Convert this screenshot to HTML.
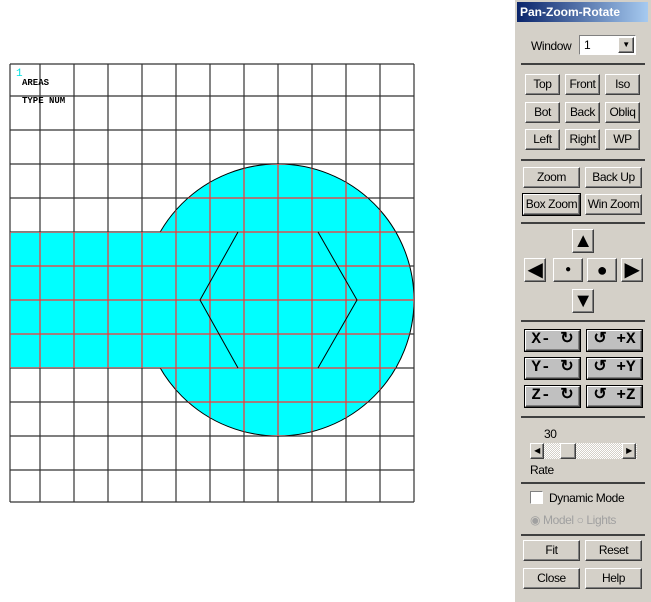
<!DOCTYPE html>
<html><head><style>
body{margin:0;width:651px;height:602px;background:#fff;position:relative;overflow:hidden;font-family:"Liberation Sans",sans-serif;font-size:12px}
#panel{position:absolute;left:514px;top:0;width:137px;height:602px;background:#d4d0c8;border-left:1px solid #fff;box-shadow:inset -1px 0 #808080;letter-spacing:-0.4px}
.title{position:absolute;left:2px;top:2px;width:131px;height:20px;background:linear-gradient(90deg,#0a246a,#a6caf0);color:#fff;font-weight:bold;font-size:12px;line-height:20px;padding-left:3px;box-sizing:border-box;letter-spacing:0}
.b{position:absolute;height:21px;background:#d4d0c8;border:1px solid;border-color:#fff #404040 #404040 #fff;box-shadow:inset -1px -1px #808080;box-sizing:border-box;text-align:center;line-height:19px;font-size:12px;color:#000}
.sep{position:absolute;left:6px;width:124px;height:0;border-top:2px solid #404040}
.rot{font-family:"Liberation Mono",monospace;font-weight:bold;font-size:16px;line-height:17px;background:#c0c0c0;outline:1px solid #000;letter-spacing:0}
</style></head><body>
<svg width="514" height="602" style="position:absolute;left:0;top:0">
<defs><clipPath id="c"><circle cx="278" cy="300" r="136"/><rect x="10" y="232" width="200" height="136"/></clipPath></defs>
<g stroke="#333" stroke-width="1.2">
<path d="M10 64V502M40 64V502M74 64V502M108 64V502M142 64V502M176 64V502M210 64V502M244 64V502M278 64V502M312 64V502M346 64V502M380 64V502M414 64V502M10 64H414M10 96H414M10 130H414M10 164H414M10 198H414M10 232H414M10 266H414M10 300H414M10 334H414M10 368H414M10 402H414M10 436H414M10 470H414M10 502H414"/>
</g>
<circle cx="278" cy="300" r="136" fill="#00ffff" stroke="#000" stroke-width="1"/>
<rect x="10" y="232" width="200" height="136" fill="#00ffff"/>
<g clip-path="url(#c)" stroke="#ff3030" stroke-width="1.2">
<path d="M10 64V502M40 64V502M74 64V502M108 64V502M142 64V502M176 64V502M210 64V502M244 64V502M278 64V502M312 64V502M346 64V502M380 64V502M414 64V502M10 164H414M10 198H414M10 232H414M10 266H414M10 300H414M10 334H414M10 368H414M10 402H414M10 436H414"/>
</g>
<path d="M238 232L200 300L238 368M318 232L357 300L318 368" fill="none" stroke="#000" stroke-width="1"/>
<text x="16" y="76" fill="#00e0e0" font-family="Liberation Mono" font-size="11">1</text>
<text x="22" y="85" font-family="Liberation Mono" font-size="9" font-weight="bold" fill="#000">AREAS</text>
<text x="22" y="103" font-family="Liberation Mono" font-size="9" font-weight="bold" fill="#000">TYPE NUM</text>
</svg>
<div id="panel">
<div class="title">Pan-Zoom-Rotate</div>
<div style="position:absolute;left:16px;top:39px">Window</div>
<div style="position:absolute;left:64px;top:35px;width:57px;height:20px;background:#fff;border:1px solid;border-color:#808080 #fff #fff #808080;box-sizing:border-box;padding-left:4px;line-height:18px">1<div class="b" style="left:38px;top:1px;width:16px;height:16px;line-height:14px;font-size:8px">▼</div></div>
<div class="sep" style="top:63px"></div>
<div class="b" style="left:10px;top:74px;width:35px">Top</div><div class="b" style="left:50px;top:74px;width:35px">Front</div><div class="b" style="left:90px;top:74px;width:35px">Iso</div>
<div class="b" style="left:10px;top:102px;width:35px">Bot</div><div class="b" style="left:50px;top:102px;width:35px">Back</div><div class="b" style="left:90px;top:102px;width:35px">Obliq</div>
<div class="b" style="left:10px;top:129px;width:35px">Left</div><div class="b" style="left:50px;top:129px;width:35px">Right</div><div class="b" style="left:90px;top:129px;width:35px">WP</div>
<div class="sep" style="top:159px"></div>
<div class="b" style="left:8px;top:167px;width:57px">Zoom</div><div class="b" style="left:70px;top:167px;width:57px">Back Up</div>
<div class="b" style="left:8px;top:194px;width:57px;outline:1px solid #000">Box Zoom</div><div class="b" style="left:70px;top:194px;width:57px">Win Zoom</div>
<div class="sep" style="top:222px"></div>
<div class="b" style="left:57px;top:229px;width:22px;height:24px;font-size:20px;line-height:22px">▲</div>
<div class="b" style="left:9px;top:258px;width:22px;height:24px;font-size:20px;line-height:22px">◀</div>
<div class="b" style="left:38px;top:258px;width:30px;height:24px;font-size:10px;line-height:22px">●</div>
<div class="b" style="left:72px;top:258px;width:30px;height:24px;font-size:18px;line-height:22px">●</div>
<div class="b" style="left:106px;top:258px;width:22px;height:24px;font-size:20px;line-height:22px">▶</div>
<div class="b" style="left:57px;top:289px;width:22px;height:24px;font-size:20px;line-height:22px">▼</div>
<div class="sep" style="top:320px"></div>
<div class="b rot" style="left:10px;top:330px;width:55px">X- ↻</div><div class="b rot" style="left:72px;top:330px;width:55px">↺ +X</div>
<div class="b rot" style="left:10px;top:358px;width:55px">Y- ↻</div><div class="b rot" style="left:72px;top:358px;width:55px">↺ +Y</div>
<div class="b rot" style="left:10px;top:386px;width:55px">Z- ↻</div><div class="b rot" style="left:72px;top:386px;width:55px">↺ +Z</div>
<div class="sep" style="top:416px"></div>
<div style="position:absolute;left:29px;top:427px">30</div>
<div style="position:absolute;left:15px;top:443px;width:107px;height:16px;background:repeating-conic-gradient(#fff 0 25%,#d4d0c8 0 50%) 0 0/2px 2px"></div>
<div class="b" style="left:15px;top:443px;width:14px;height:16px;font-size:8px;line-height:14px">◀</div>
<div class="b" style="left:45px;top:443px;width:16px;height:16px"></div>
<div class="b" style="left:107px;top:443px;width:14px;height:16px;font-size:8px;line-height:14px">▶</div>
<div style="position:absolute;left:15px;top:463px">Rate</div>
<div class="sep" style="top:482px"></div>
<div style="position:absolute;left:15px;top:491px;width:13px;height:13px;background:#fff;border:1px solid;border-color:#808080 #fff #fff #808080;box-sizing:border-box"></div>
<div style="position:absolute;left:34px;top:491px">Dynamic Mode</div>
<div style="position:absolute;left:15px;top:513px;color:#a0a0a0">◉ Model ○ Lights</div>
<div class="sep" style="top:534px"></div>
<div class="b" style="left:8px;top:540px;width:57px">Fit</div><div class="b" style="left:70px;top:540px;width:57px">Reset</div>
<div class="b" style="left:8px;top:568px;width:57px">Close</div><div class="b" style="left:70px;top:568px;width:57px">Help</div>
</div>
</body></html>
